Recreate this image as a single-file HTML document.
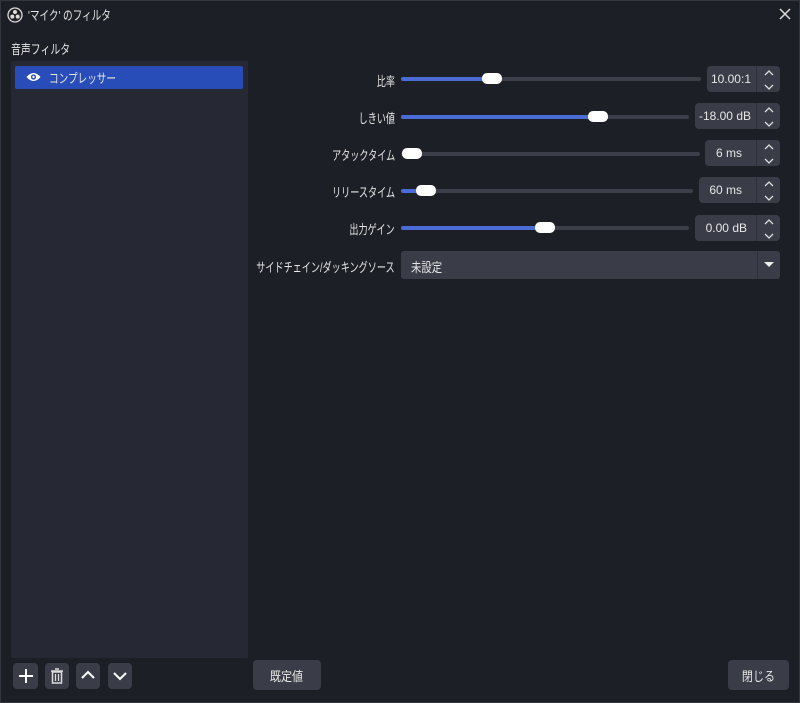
<!DOCTYPE html><html><head><meta charset="utf-8"><style>
*{margin:0;padding:0;box-sizing:border-box}
body{width:800px;height:703px;background:#1d1f27;font-family:"Liberation Sans","Noto Sans CJK JP",sans-serif;color:#e6e6e6;position:relative;overflow:hidden;font-size:12px}
.a{position:absolute}
.jp{display:inline-block;transform:scaleX(.75);white-space:nowrap}
.lbl{position:absolute;right:405px;text-align:right;transform-origin:right center;transform:scaleX(.7);white-space:nowrap;font-size:13px}
.track{position:absolute;height:4px;background:#3c3f4a;border-radius:2px;left:401px}
.fill{position:absolute;height:4px;background:#4a6cd4;border-radius:2px;left:401px}
.h{position:absolute;width:20px;height:11px;background:#fff;border-radius:5px}
.spin{position:absolute;height:26px;background:#3a3d48;border-radius:4px;right:20px}
.spin .v{position:absolute;left:0;right:25px;top:0;height:26px;line-height:26px;text-align:right;padding-right:4px;font-size:12px}
.spin .ar{position:absolute;right:0;top:0;width:24px;height:26px;border-left:1px solid #2e3039}
.btn{position:absolute;background:#3a3d48;border-radius:4px}
</style></head><body>
<div class="a" style="left:0;top:0;width:800px;height:703px;border:1px solid #33363f"></div>
<svg class="a" style="left:7px;top:7px" width="16" height="16" viewBox="0 0 16 16"><circle cx="8" cy="8" r="7" fill="#222" stroke="#ddd" stroke-width="1.3"/><circle cx="8" cy="5" r="2" fill="#ddd"/><circle cx="5.3" cy="9.6" r="2" fill="#ddd"/><circle cx="10.7" cy="9.6" r="2" fill="#ddd"/></svg>
<div class="a" style="left:28px;top:5px;font-size:13px;transform-origin:left;transform:scaleX(.74);white-space:nowrap">'マイク' のフィルタ</div>
<svg class="a" style="left:779px;top:8px" width="12" height="12"><path d="M1 1L11 11M11 1L1 11" stroke="#ddd" stroke-width="1.5"/></svg>
<div class="a" style="left:11px;top:39px;font-size:13px;transform-origin:left;transform:scaleX(.76);white-space:nowrap">音声フィルタ</div>
<div class="a" style="left:11px;top:61px;width:237px;height:597px;background:#262934;border-radius:2px"></div>
<div class="a" style="left:15px;top:66px;width:228px;height:23px;background:#284cb8;border-radius:2px"></div>
<svg class="a" style="left:26px;top:71px" width="15" height="12" viewBox="0 0 15 12"><path d="M0.5 6Q7.5 -2 14.5 6Q7.5 14 0.5 6Z" fill="#fff"/><circle cx="7.5" cy="6" r="2.6" fill="#284cb8"/><circle cx="7.5" cy="6" r="1.2" fill="#fff"/></svg>
<div class="a" style="left:49px;top:68px;font-size:13px;transform-origin:left;transform:scaleX(.74);white-space:nowrap">コンプレッサー</div>

<div class="lbl" style="top:71px">比率</div>
<div class="track" style="top:77px;width:300px"></div><div class="fill" style="top:77px;width:90px"></div><div class="h" style="left:482px;top:73px"></div>
<div class="spin" style="top:66px;width:73px"><div class="v">10.00:1</div><div class="ar"></div></div>

<div class="lbl" style="top:108px">しきい値</div>
<div class="track" style="top:115px;width:288px"></div><div class="fill" style="top:115px;width:196px"></div><div class="h" style="left:588px;top:111px"></div>
<div class="spin" style="top:103px;width:85px"><div class="v">-18.00 dB</div><div class="ar"></div></div>

<div class="lbl" style="top:145px">アタックタイム</div>
<div class="track" style="top:152px;width:299px"></div><div class="h" style="left:402px;top:148px"></div>
<div class="spin" style="top:140px;width:75px"><div class="v" style="padding-right:13px">6 ms</div><div class="ar"></div></div>

<div class="lbl" style="top:182px">リリースタイム</div>
<div class="track" style="top:189px;width:292px"></div><div class="fill" style="top:189px;width:20px"></div><div class="h" style="left:416px;top:185px"></div>
<div class="spin" style="top:177px;width:81px"><div class="v" style="padding-right:13px">60 ms</div><div class="ar"></div></div>

<div class="lbl" style="top:219px">出力ゲイン</div>
<div class="track" style="top:226px;width:288px"></div><div class="fill" style="top:226px;width:142px"></div><div class="h" style="left:535px;top:222px"></div>
<div class="spin" style="top:215px;width:85px"><div class="v" style="padding-right:8px">0.00 dB</div><div class="ar"></div></div>

<svg class="a" style="left:764px;top:69px" width="10" height="200" viewBox="0 0 10 200">
<g fill="none" stroke="#ddd" stroke-width="1.3">
<path d="M1 6L5 2L9 6M1 16L5 20L9 16"/>
<path d="M1 43L5 39L9 43M1 53L5 57L9 53"/>
<path d="M1 80L5 76L9 80M1 90L5 94L9 90"/>
<path d="M1 117L5 113L9 117M1 127L5 131L9 127"/>
<path d="M1 155L5 151L9 155M1 165L5 169L9 165"/>
</g></svg>

<div class="lbl" style="top:257px">サイドチェイン/ダッキングソース</div>
<div class="a" style="left:401px;top:251px;width:379px;height:28px;background:#3a3d48;border-radius:3px"></div>
<div class="a" style="left:757px;top:251px;width:1px;height:28px;background:#2e3039"></div>
<div class="a" style="left:411px;top:257px;font-size:13px;transform-origin:left;transform:scaleX(.8);white-space:nowrap">未設定</div>
<svg class="a" style="left:764px;top:262px" width="10" height="6"><path d="M0 0H10L5 5Z" fill="#eee"/></svg>

<div class="btn" style="left:13px;top:663px;width:25px;height:26px"></div>
<svg class="a" style="left:18px;top:668px" width="16" height="16"><path d="M8 1V15M1 8H15" stroke="#fff" stroke-width="2"/></svg>
<div class="btn" style="left:45px;top:663px;width:24px;height:26px"></div>
<svg class="a" style="left:50px;top:668px" width="14" height="16"><path d="M1 3H13M5 1H9" stroke="#ddd" stroke-width="1.5"/><rect x="2.5" y="4" width="9" height="11" fill="none" stroke="#ddd" stroke-width="1.5"/><path d="M5.5 6V13M8.5 6V13" stroke="#ddd" stroke-width="1.3"/></svg>
<div class="btn" style="left:76px;top:663px;width:24px;height:26px"></div>
<svg class="a" style="left:81px;top:670px" width="14" height="10"><path d="M1 8L7 2L13 8" fill="none" stroke="#fff" stroke-width="2"/></svg>
<div class="btn" style="left:108px;top:663px;width:24px;height:26px"></div>
<svg class="a" style="left:113px;top:671px" width="14" height="10"><path d="M1 2L7 8L13 2" fill="none" stroke="#fff" stroke-width="2"/></svg>

<div class="btn" style="left:253px;top:660px;width:68px;height:30px"></div>
<div class="a" style="left:253px;top:666px;width:68px;text-align:center;font-size:13px"><span class="jp" style="transform:scaleX(.85)">既定値</span></div>
<div class="btn" style="left:728px;top:660px;width:61px;height:30px"></div>
<div class="a" style="left:728px;top:666px;width:61px;text-align:center;font-size:13px"><span class="jp" style="transform:scaleX(.85)">閉じる</span></div>
</body></html>
